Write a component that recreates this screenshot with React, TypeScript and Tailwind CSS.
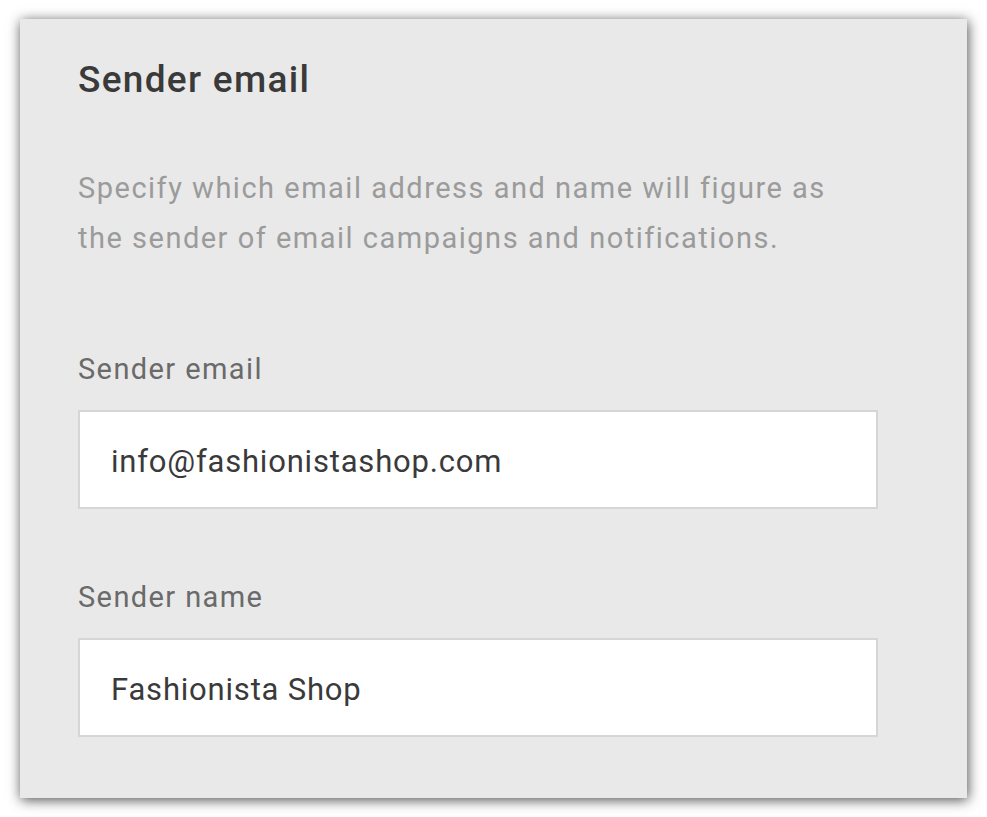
export default function App() {
  return (
    <div className="w-[987px] h-[817px] bg-white pt-[19px] pl-[20px]" style={{ fontFamily: 'Roboto, "Noto Sans", sans-serif' }}>
      <div className="w-[947px] h-[779px] bg-[#e9e9e9] shadow-[1px_2px_12px_rgba(0,0,0,0.7)] pl-[58px] pr-[89px] pt-[33px]">
        <h1 className="text-[37px] leading-[56px] font-medium tracking-[1.3px] text-[#3a3a3a]">Sender email</h1>
        <p className="mt-[55px] text-[29px] leading-[50px] tracking-[1.5px] text-[#9b9b9b] whitespace-nowrap">
          Specify which email address and name will figure as<br />the sender of email campaigns and notifications.
        </p>
        <div className="mt-[86px] text-[29px] leading-[40px] tracking-[1.4px] text-[#6a6a6a]">Sender email</div>
        <div className="mt-[21px] h-[99px] bg-white border-2 border-[#d6d6d6] flex items-center pl-[31px] pt-[5px] text-[31px] tracking-[0.8px] text-[#3a3a3a]">
          info@fashionistashop.com
        </div>
        <div className="mt-[68px] text-[29px] leading-[40px] tracking-[1.4px] text-[#6a6a6a]">Sender name</div>
        <div className="mt-[21px] h-[99px] bg-white border-2 border-[#d6d6d6] flex items-center pl-[31px] pt-[5px] text-[31px] tracking-[0.8px] text-[#3a3a3a]">
          Fashionista Shop
        </div>
      </div>
    </div>
  );
}
